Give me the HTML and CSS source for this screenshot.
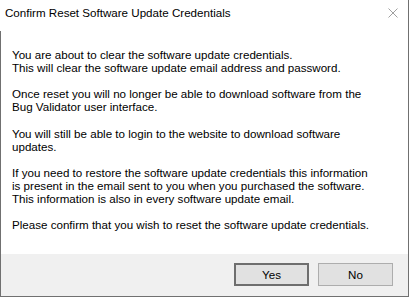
FILE: index.html
```html
<!DOCTYPE html>
<html>

<head>
  <meta charset="UTF-8">
  <title>Confirm Reset Software Update Credentials</title>
  <link rel="stylesheet" href="styles.css">
</head>

<body>
  <div class="dialog">
    <div class="titlebar">
      <span class="titlebar-text">Confirm Reset Software Update Credentials</span>
      <span class="titlebar-close">
        <svg width="10" height="10" viewBox="0 0 10 10">
          <path d="M0.5 0.5 L9.5 9.5 M9.5 0.5 L0.5 9.5" stroke="#a0a0a0" stroke-width="1" fill="none" />
        </svg>
      </span>
    </div>
    <div class="dialog-body">
      <p>You are about to clear the software update credentials.<br>This will clear the software update email address and password.</p>
      <p>Once reset you will no longer be able to download software from the<br>Bug Validator user interface.</p>
      <p>You will still be able to login to the website to download software<br>updates.</p>
      <p>If you need to restore the software update credentials this information<br>is present in the email sent to you when you purchased the software.<br>This information is also in every software update email.</p>
      <p>Please confirm that you wish to reset the software update credentials.</p>
    </div>
    <div class="dialog-buttons">
      <button class="btn btn_default">Yes</button>
      <button class="btn">No</button>
    </div>
  </div>
</body>

</html>
```

FILE: styles.css
```css
html,
body {
  margin: 0;
  padding: 0;
  background-color: #ffffff;
}

.dialog {
  width: 409px;
  height: 297px;
  box-sizing: border-box;
  display: flex;
  flex-direction: column;
  font-family: "Liberation Sans", Arial, sans-serif;
  color: #000000;
}

.titlebar {
  height: 31px;
  flex: none;
  display: flex;
  align-items: flex-start;
  justify-content: space-between;
  border-right: 1px solid #707070;
}

.titlebar-text {
  font-size: 11.6px;
  line-height: 16px;
  padding: 5px 0 0 5px;
}

.titlebar-close {
  display: block;
  width: 10px;
  height: 10px;
  margin: 8px 10px 0 0;
}

.titlebar-close svg {
  display: block;
}

.dialog-body {
  flex: 1;
  padding: 17px 0 0 11px;
  border-left: 1px solid #707070;
  border-right: 1px solid #707070;
  font-size: 11.6px;
  line-height: 13.1px;
  white-space: nowrap;
}

.dialog-body p {
  margin: 0 0 13.1px 0;
}

.dialog-buttons {
  height: 43px;
  flex: none;
  box-sizing: border-box;
  display: flex;
  justify-content: flex-end;
  align-items: flex-start;
  gap: 9px;
  padding: 9px 15px 0 0;
  background-color: #f0f0f0;
  border-left: 1px solid #707070;
  border-right: 1px solid #707070;
  border-bottom: 1px solid #707070;
}

.btn {
  width: 75px;
  height: 23px;
  box-sizing: border-box;
  padding: 0;
  margin: 0;
  background-color: #e1e1e1;
  border: 1px solid #adadad;
  font-family: "Liberation Sans", Arial, sans-serif;
  font-size: 11.6px;
  color: #000000;
}

.btn_default {
  border: 2px solid #6e6e6e;
}
```
